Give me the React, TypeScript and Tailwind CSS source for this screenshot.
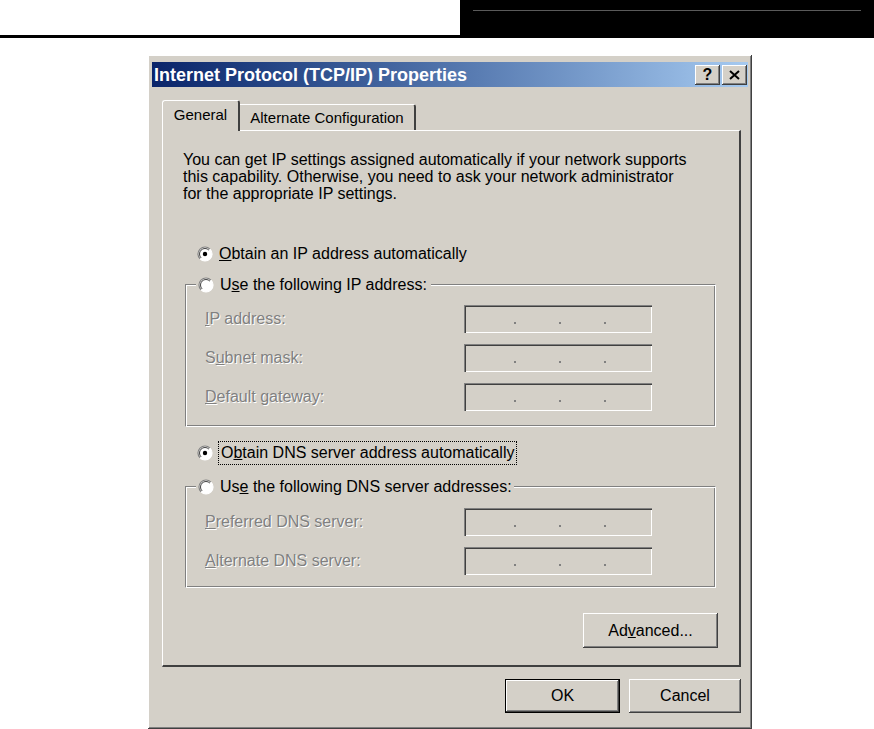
import React from 'react';

const raised = 'shadow-[inset_-1px_-1px_#404040,inset_1px_1px_#ffffff,inset_-2px_-2px_#808080,inset_2px_2px_#d4d0c8]';
const sunken = 'shadow-[inset_1px_1px_#808080,inset_2px_2px_#404040,inset_-1px_-1px_#ffffff,inset_-2px_-2px_#d4d0c8]';
const etched = 'border border-t-[#808080] border-l-[#808080] border-b-white border-r-white shadow-[inset_1px_1px_#ffffff,inset_-1px_-1px_#808080]';

const Radio = ({ checked }: { checked?: boolean }) => (
  <svg width="16" height="16" viewBox="0 0 16 16" className="shrink-0">
    <circle cx="8" cy="8" r="7" fill="#ffffff" />
    <path d="M3.05 12.95 A7 7 0 0 1 12.95 3.05" stroke="#808080" strokeWidth="1.2" fill="none" />
    <path d="M4.1 11.9 A5.5 5.5 0 0 1 11.9 4.1" stroke="#404040" strokeWidth="1" fill="none" />
    <path d="M12.95 3.05 A7 7 0 0 1 3.05 12.95" stroke="#ffffff" strokeWidth="1.2" fill="none" />
    {checked && <circle cx="8" cy="8" r="2.2" fill="#000000" />}
  </svg>
);

const IpField = () => (
  <div className={`w-[188px] h-[28px] bg-[#d4d0c8] ${sunken} flex items-end pl-[50px] gap-[43px] pb-[9px]`}>
    <span className="w-[2px] h-[2px] bg-[#808080]" />
    <span className="w-[2px] h-[2px] bg-[#808080]" />
    <span className="w-[2px] h-[2px] bg-[#808080]" />
  </div>
);

const Row = ({ label, k, rest, top }: { label: string; k: string; rest: string; top: string }) => (
  <div className={`flex items-center justify-between pl-[19px] pr-[63px] ${top}`}>
    <span className="text-[#808080] [text-shadow:1px_1px_0_#ffffff]">
      {label}
      <u>{k}</u>
      {rest}
    </span>
    <IpField />
  </div>
);

const App = () => {
  return (
    <div className="w-[874px] h-[729px] bg-white overflow-hidden font-['Liberation_Sans',Arial,sans-serif] text-[16px] leading-[18px] text-black">
      {/* page header */}
      <div className="flex h-[38px]">
        <div className="w-[460px] h-[38px] border-b-[3px] border-black bg-white" />
        <div className="flex-1 bg-black pt-[10px] pl-[13px] pr-[13px]">
          <div className="h-px bg-[#5a5a5a]" />
        </div>
      </div>

      {/* dialog */}
      <div className={`ml-[148px] mt-[17px] w-[604px] h-[674px] bg-[#d4d0c8] ${raised} p-[4px] flex flex-col`}>
        {/* title bar */}
        <div className="h-[25px] mt-[3px] flex items-center justify-between bg-gradient-to-r from-[#0a246a] to-[#a6caf0] pl-[2px] pr-[1px]">
          <span className="text-white font-bold text-[18px] leading-none">Internet Protocol (TCP/IP) Properties</span>
          <div className="flex gap-[2px]">
            <div className={`w-[25px] h-[20px] bg-[#d4d0c8] ${raised} flex items-center justify-center font-bold text-[16px] leading-none`}>?</div>
            <div className={`w-[25px] h-[20px] bg-[#d4d0c8] ${raised} flex items-center justify-center`}>
              <svg width="11" height="10" viewBox="0 0 11 10">
                <path d="M1 1 L10 9 M10 1 L1 9" stroke="#000000" strokeWidth="2" />
              </svg>
            </div>
          </div>
        </div>

        {/* tabs */}
        <div className="ml-[10px] mt-[13px] flex items-end h-[30px] relative z-10">
          <div className="h-[31px] w-[78px] bg-[#d4d0c8] border-t border-l border-white border-r-2 border-r-[#404040] rounded-t-[3px] flex items-center justify-center text-[15px] pb-[3px] -mb-px">
            General
          </div>
          <div className="h-[26px] w-[176px] bg-[#d4d0c8] border-t border-white border-r-2 border-r-[#404040] rounded-tr-[3px] flex items-center justify-center text-[15px]">
            Alternate Configuration
          </div>
        </div>

        {/* tab panel */}
        <div className="ml-[10px] w-[579px] h-[537px] border-t border-l border-white border-r-2 border-b-2 border-r-[#404040] border-b-[#404040] flex flex-col">
          <p className="pl-[20px] pt-[20px] leading-[17px] w-[530px]">
            You can get IP settings assigned automatically if your network supports this capability. Otherwise, you need to ask your network administrator for the appropriate IP settings.
          </p>

          <div className="flex items-center gap-[6px] pl-[34px] mt-[43px]">
            <Radio checked />
            <span>
              <u>O</u>btain an IP address automatically
            </span>
          </div>

          <div className={`ml-[22px] mr-[23px] mt-[21px] h-[143px] ${etched} relative`}>
            <div className="absolute -top-[9px] left-[10px] flex items-center gap-[6px] bg-[#d4d0c8] pr-[4px] pl-[2px]">
              <Radio />
              <span>
                U<u>s</u>e the following IP address:
              </span>
            </div>
            <Row label="" k="I" rest="P address:" top="mt-[20px]" />
            <Row label="S" k="u" rest="bnet mask:" top="mt-[11px]" />
            <Row label="" k="D" rest="efault gateway:" top="mt-[11px]" />
          </div>

          <div className="flex items-center gap-[5px] pl-[34px] mt-[14px]">
            <Radio checked />
            <span className="border border-dotted border-black px-[2px] leading-[22px]">
              O<u>b</u>tain DNS server address automatically
            </span>
          </div>

          <div className={`ml-[22px] mr-[23px] mt-[21px] h-[102px] ${etched} relative`}>
            <div className="absolute -top-[9px] left-[10px] flex items-center gap-[6px] bg-[#d4d0c8] pr-[2px] pl-[2px]">
              <Radio />
              <span>
                Us<u>e</u> the following DNS server addresses:
              </span>
            </div>
            <Row label="" k="P" rest="referred DNS server:" top="mt-[21px]" />
            <Row label="" k="A" rest="lternate DNS server:" top="mt-[11px]" />
          </div>

          <div className="flex justify-end mr-[21px] mt-[25px]">
            <button className={`w-[135px] h-[35px] bg-[#d4d0c8] ${raised}`}>
              Ad<u>v</u>anced...
            </button>
          </div>
        </div>

        {/* bottom buttons */}
        <div className="flex justify-end gap-[9px] mt-[12px] mr-[7px]">
          <button className="w-[115px] h-[34px] bg-[#d4d0c8] border border-black shadow-[inset_-1px_-1px_#404040,inset_1px_1px_#ffffff,inset_-2px_-2px_#808080]">
            OK
          </button>
          <button className={`w-[112px] h-[34px] bg-[#d4d0c8] ${raised}`}>Cancel</button>
        </div>
      </div>
    </div>
  );
};

export default App;
